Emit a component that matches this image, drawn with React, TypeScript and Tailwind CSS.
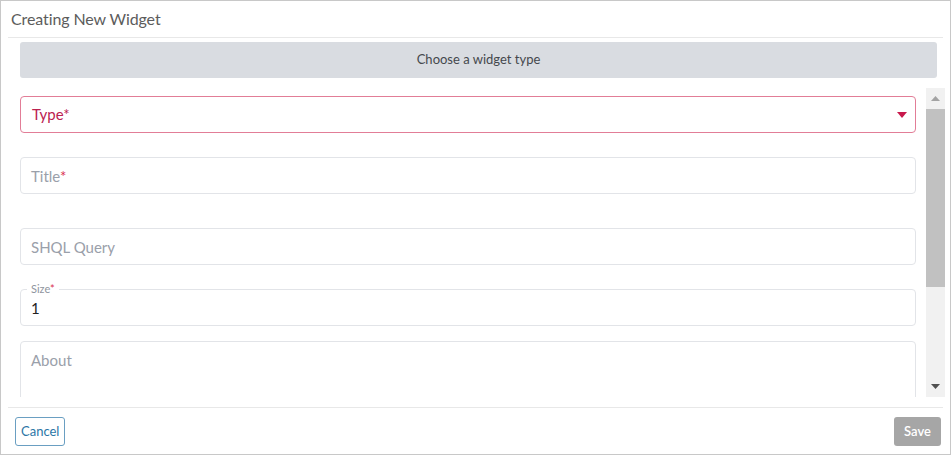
import React from 'react'

const FONT = { fontFamily: 'Lato, "Open Sans", sans-serif' }

function Field({ label, required, height = 'h-[37px]', className = '' }: { label: string; required?: boolean; height?: string; className?: string }) {
  return (
    <div className={`${height} rounded-[4px] border border-[#e2e4e8] bg-white px-[10px] flex items-start pt-[8px] ${className}`}>
      <span className="text-[15px] text-[#9aa0aa] leading-[20px]">
        {label}
        {required && <span className="text-[#d9304f]">*</span>}
      </span>
    </div>
  )
}

export default function App() {
  return (
    <div style={FONT} className="w-[951px] h-[455px] bg-white border border-[#c8c8c8] flex flex-col overflow-hidden">
      {/* header */}
      <div className="mx-[7px] pl-[3px] h-[37px] shrink-0 border-b border-[#e8e8e8] flex items-center">
        <h1 className="text-[16px] text-[#5c5c5c] font-normal tracking-[-0.1px]">Creating New Widget</h1>
      </div>

      {/* widget type bar */}
      <div className="ml-[19px] mr-[13px] mt-[4px] h-[36px] shrink-0 rounded-[3px] bg-[#d9dce1] flex items-center justify-center text-[13px] text-[#45484d]">
        Choose a widget type
      </div>

      {/* scroll area */}
      <div className="mt-[10px] h-[309px] shrink-0 flex ml-[19px] mr-[5px]">
        <div className="flex-1 overflow-hidden pr-[10px] pt-[8px]">
          {/* type select */}
          <div className="h-[37px] rounded-[4px] border border-[#e27d97] flex items-center justify-between pl-[11px] pr-[8px]">
            <span className="text-[15px] text-[#bb2150]">Type*</span>
            <svg width="10" height="6" viewBox="0 0 10 6">
              <path d="M0 0 L10 0 L5 6 Z" fill="#c8194c" />
            </svg>
          </div>

          <Field label="Title" required className="mt-[24px]" />
          <Field label="SHQL Query" className="mt-[34px]" />

          {/* size */}
          <div className="relative mt-[24px] h-[37px] rounded-[4px] border border-[#e2e4e8] flex items-center px-[10px] pt-[1px]">
            <span className="absolute left-[6px] -top-[8px] bg-white px-[4px] text-[11px] leading-[14px] text-[#8f959e]">
              Size<span className="text-[#d9304f]">*</span>
            </span>
            <span className="text-[15px] text-[#222222]">1</span>
          </div>

          <Field label="About" height="h-[80px]" className="mt-[15px]" />
        </div>

        {/* scrollbar */}
        <div className="w-[19px] bg-[#f1f1f1] flex flex-col">
          <div className="h-[21px] flex items-center justify-center">
            <svg width="9" height="5" viewBox="0 0 9 5">
              <path d="M0 5 L9 5 L4.5 0 Z" fill="#a3a3a3" />
            </svg>
          </div>
          <div className="h-[178px] bg-[#c1c1c1]" />
          <div className="flex-1" />
          <div className="h-[21px] flex items-center justify-center">
            <svg width="9" height="5" viewBox="0 0 9 5">
              <path d="M0 0 L9 0 L4.5 5 Z" fill="#505050" />
            </svg>
          </div>
        </div>
      </div>

      {/* footer */}
      <div className="mt-[10px] mx-[7px] flex-1 border-t border-[#e8e8e8] flex items-start justify-between pt-[9px] pl-[7px] pr-[2px]">
        <button className="h-[29px] px-[5px] rounded-[3px] border border-[#6a9fc2] bg-white text-[13px] text-[#2b76a6]">
          Cancel
        </button>
        <button className="h-[29px] px-[10px] rounded-[3px] bg-[#a6a6a6] text-[13px] font-semibold text-white">
          Save
        </button>
      </div>
    </div>
  )
}
